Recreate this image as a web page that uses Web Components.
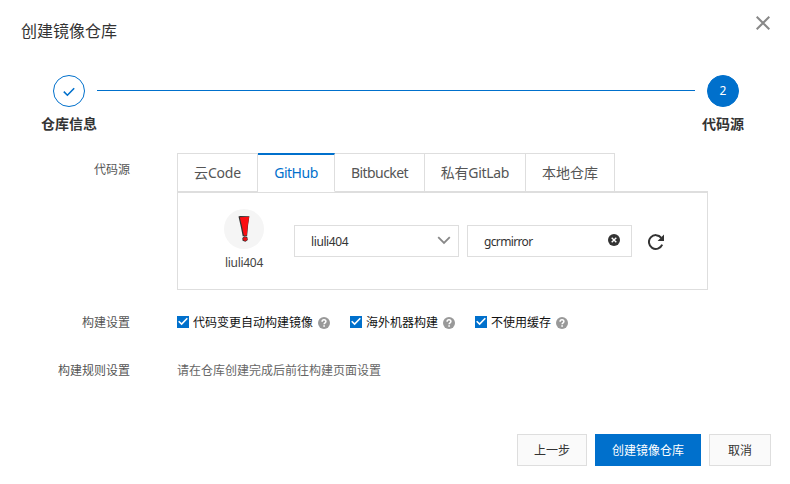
<!DOCTYPE html>
<html lang="zh-CN">
<head>
<meta charset="utf-8">
<title>创建镜像仓库</title>
<style>
body{margin:0;background:#fff;font:12px/18px "Noto Sans","Noto Sans CJK SC",sans-serif;color:#333}
</style>
</head>
<body>
<repo-dialog></repo-dialog>
<script>
function define(name, html, setup) {
  const t = document.createElement('template');
  t.innerHTML = html;
  customElements.define(name, class extends HTMLElement {
    constructor() {
      super();
      this.attachShadow({mode: 'open'}).append(t.content.cloneNode(true));
    }
    connectedCallback() { if (setup) setup(this, this.shadowRoot); }
  });
}

define('step-item', `<style>
:host{display:flex;flex-direction:column;align-items:center;width:64px;flex:none}
.dot{box-sizing:border-box;width:32px;height:32px;border:1px solid #0070cc;border-radius:50%;display:grid;place-items:center;color:#0070cc;line-height:30px}
:host([current]) .dot{background:#0070cc;color:#fff}
.name{font-size:14px;line-height:20px;font-weight:700;white-space:nowrap;margin-top:7px}
</style><div class="dot"><slot name="mark"></slot></div><div class="name"><slot></slot></div>`);

define('step-bar', `<style>
:host{display:flex;padding:0 35px 0 37px}
.line{flex:1;height:1px;background:#0070cc;margin:15px -4px 0}
svg{display:block;margin-top:2px}
</style>
<step-item><svg slot="mark" width="12" height="10" viewBox="0 0 12 10"><path d="M.8 4.6l3.6 3.6 6.8-7" fill="none" stroke="#0070cc" stroke-width="1.6"/></svg>仓库信息</step-item>
<div class="line"></div>
<step-item current><span slot="mark">2</span>代码源</step-item>`);

define('source-tab', `<style>
:host{box-sizing:border-box;height:39px;border:1px solid #dedede;border-left-width:0;text-align:center;font-size:14px;line-height:38px;color:#555;white-space:nowrap;display:block;letter-spacing:var(--ls,0)}
:host([first]){border-left-width:1px}
:host([active]){border-top:2px solid #0070cc;border-bottom-color:#fff;color:#0070cc;line-height:36px}
</style><slot></slot>`);

define('tab-list', `<style>
:host{display:flex;box-shadow:inset 0 -1px #dedede}
</style><slot></slot>`);

define('text-box', `<style>
:host{box-sizing:border-box;display:flex;align-items:center;justify-content:space-between;width:165px;height:32px;border:1px solid #dedede;padding:1px 7px 0 16px;letter-spacing:var(--ls,-.4px)}
::slotted(svg){display:block;flex:none}
</style><span><slot></slot></span><slot name="icon"></slot>`);

define('user-avatar', `<style>
:host{display:flex;flex-direction:column;align-items:center;width:40px;white-space:nowrap;letter-spacing:-.3px;color:#444}
svg{display:block;margin-bottom:5px}
</style><svg width="40" height="40" viewBox="0 0 40 40"><circle cx="20" cy="20" r="20" fill="#f5f5f5"/>
<path d="M14.5 7.4l1.5-.4 9.4.2-1.3 9-1 11h-4.4l-2-10z" fill="#333"/><path d="M15.8 8.2l9.4-.5-1.5 9-.9 9.8h-2.9l-2-9.8z" fill="#fb0d12"/>
<path d="M18.3 29l2-1.7 3 .8.5 3-2.4 1.6-2.8-1z" fill="#3a3032"/><path d="M19.2 29l1.8-1 2.2 1-.2 2-1.8.9-1.8-1z" fill="#f10d12"/></svg><slot></slot>`);

define('form-row', `<style>
:host{display:grid;grid-template-columns:130px 531px;column-gap:47px;align-items:start}
.label{text-align:right;color:#555;padding-top:var(--top,0)}
</style><div class="label"></div><div><slot></slot></div>`,
 (h, r) => { r.querySelector('.label').textContent = h.getAttribute('label'); });

define('check-option', `<style>
:host{display:flex;align-items:center;height:18px;color:#111;white-space:nowrap}
svg{display:block;flex:none}
.box{margin-right:4px;margin-top:-2px}.help{margin-left:5px}
</style><svg class="box" width="12" height="12" viewBox="0 0 12 12"><path fill="#0070cc" d="M0 0h12v12H0z"/><path d="M1.7 5.2l2.9 2.9 5.7-5.9" fill="none" stroke="#fff" stroke-width="1.6"/></svg><slot></slot>
<svg class="help" width="12" height="12" viewBox="0 0 12 12"><circle cx="6" cy="6" r="6" fill="#999"/><path d="M4.1 4.7C4.1 2.2 7.9 2.3 7.9 4.6 7.9 5.9 6.1 5.9 6.1 7.3" fill="none" stroke="#fff" stroke-width="1.5"/><path fill="#fff" d="M5.3 8.2h1.6v1.5H5.3z"/></svg>`);

define('action-button', `<style>
:host{box-sizing:border-box;display:block;height:32px;padding:0 16px;border:1px solid #dedede;background:#fafafa;color:#333;line-height:31px;white-space:nowrap}
:host([primary]){background:#0070cc;border-color:#0070cc;color:#fff}
:host([wide]){padding:0 18px}
</style><slot></slot>`);

define('repo-dialog', `<style>
:host{display:block;box-sizing:border-box;width:790px;height:484px;background:#fff;overflow:hidden}
header{display:flex;justify-content:space-between;align-items:flex-start;height:59px;padding:16px 20px 0 21px}
h1{font-size:16px;line-height:24px;font-weight:400;margin:3px 0 0}
svg{display:block}
step-bar{height:78px}
.source{--top:8px;height:161px}
.panel{box-sizing:border-box;height:98px;border:1px solid #dedede;display:flex;padding:16px 0 0 46px}
.fields{display:flex;margin:16px 0 0 30px;gap:8px;height:32px;align-items:center}
.fields>svg{margin-left:8px;margin-top:1px}
.opts{display:flex;gap:20px}
.build{height:48px}.rule{height:72px;color:#666}
footer{display:flex;justify-content:flex-end;gap:8px;padding-right:19px}
</style>
<header><h1>创建镜像仓库</h1><svg width="14" height="14" viewBox="0 0 14 14"><path d="M.7.7l12.6 12.6M13.3.7L.7 13.3" stroke="#888" stroke-width="2"/></svg></header>
<main>
<step-bar></step-bar>
<form-row class="source" label="代码源">
<tab-list>
<source-tab first style="width:81px;--ls:-.2px">云Code</source-tab><source-tab active style="width:77px;--ls:-.5px">GitHub</source-tab><source-tab style="width:90px;--ls:-.6px">Bitbucket</source-tab><source-tab style="width:101px;--ls:-.3px">私有GitLab</source-tab><source-tab style="width:89px">本地仓库</source-tab>
</tab-list>
<div class="panel">
<user-avatar>liuli404</user-avatar>
<div class="fields">
<text-box>liuli404<svg slot="icon" style="margin-top:-2px" width="14" height="9" viewBox="0 0 14 9"><path d="M1.2 1.2L7 7l5.8-5.8" fill="none" stroke="#888" stroke-width="1.8"/></svg></text-box>
<text-box style="padding-right:11px;--ls:-.65px">gcrmirror<svg slot="icon" style="margin-top:-3px" width="12" height="12" viewBox="0 0 12 12"><circle cx="6" cy="6" r="6" fill="#333"/><path d="M3.7 3.7l4.6 4.6m0-4.6L3.7 8.3" stroke="#fff" stroke-width="1.4"/></svg></text-box>
<svg width="16" height="16" viewBox="0 0 16 16"><path d="M14.2 10.7A6.9 6.9 0 1 1 13.3 3.8" fill="none" stroke="#333" stroke-width="2"/><path d="M16 .5v6.4H9.6z" fill="#333"/></svg>
</div></div>
</form-row>
<form-row class="build" label="构建设置"><div class="opts"><check-option>代码变更自动构建镜像</check-option><check-option>海外机器构建</check-option><check-option>不使用缓存</check-option></div></form-row>
<form-row class="rule" label="构建规则设置">请在仓库创建完成后前往构建页面设置</form-row>
</main>
<footer><action-button>上一步</action-button><action-button primary>创建镜像仓库</action-button><action-button wide>取消</action-button></footer>`);
</script>
</body>
</html>
